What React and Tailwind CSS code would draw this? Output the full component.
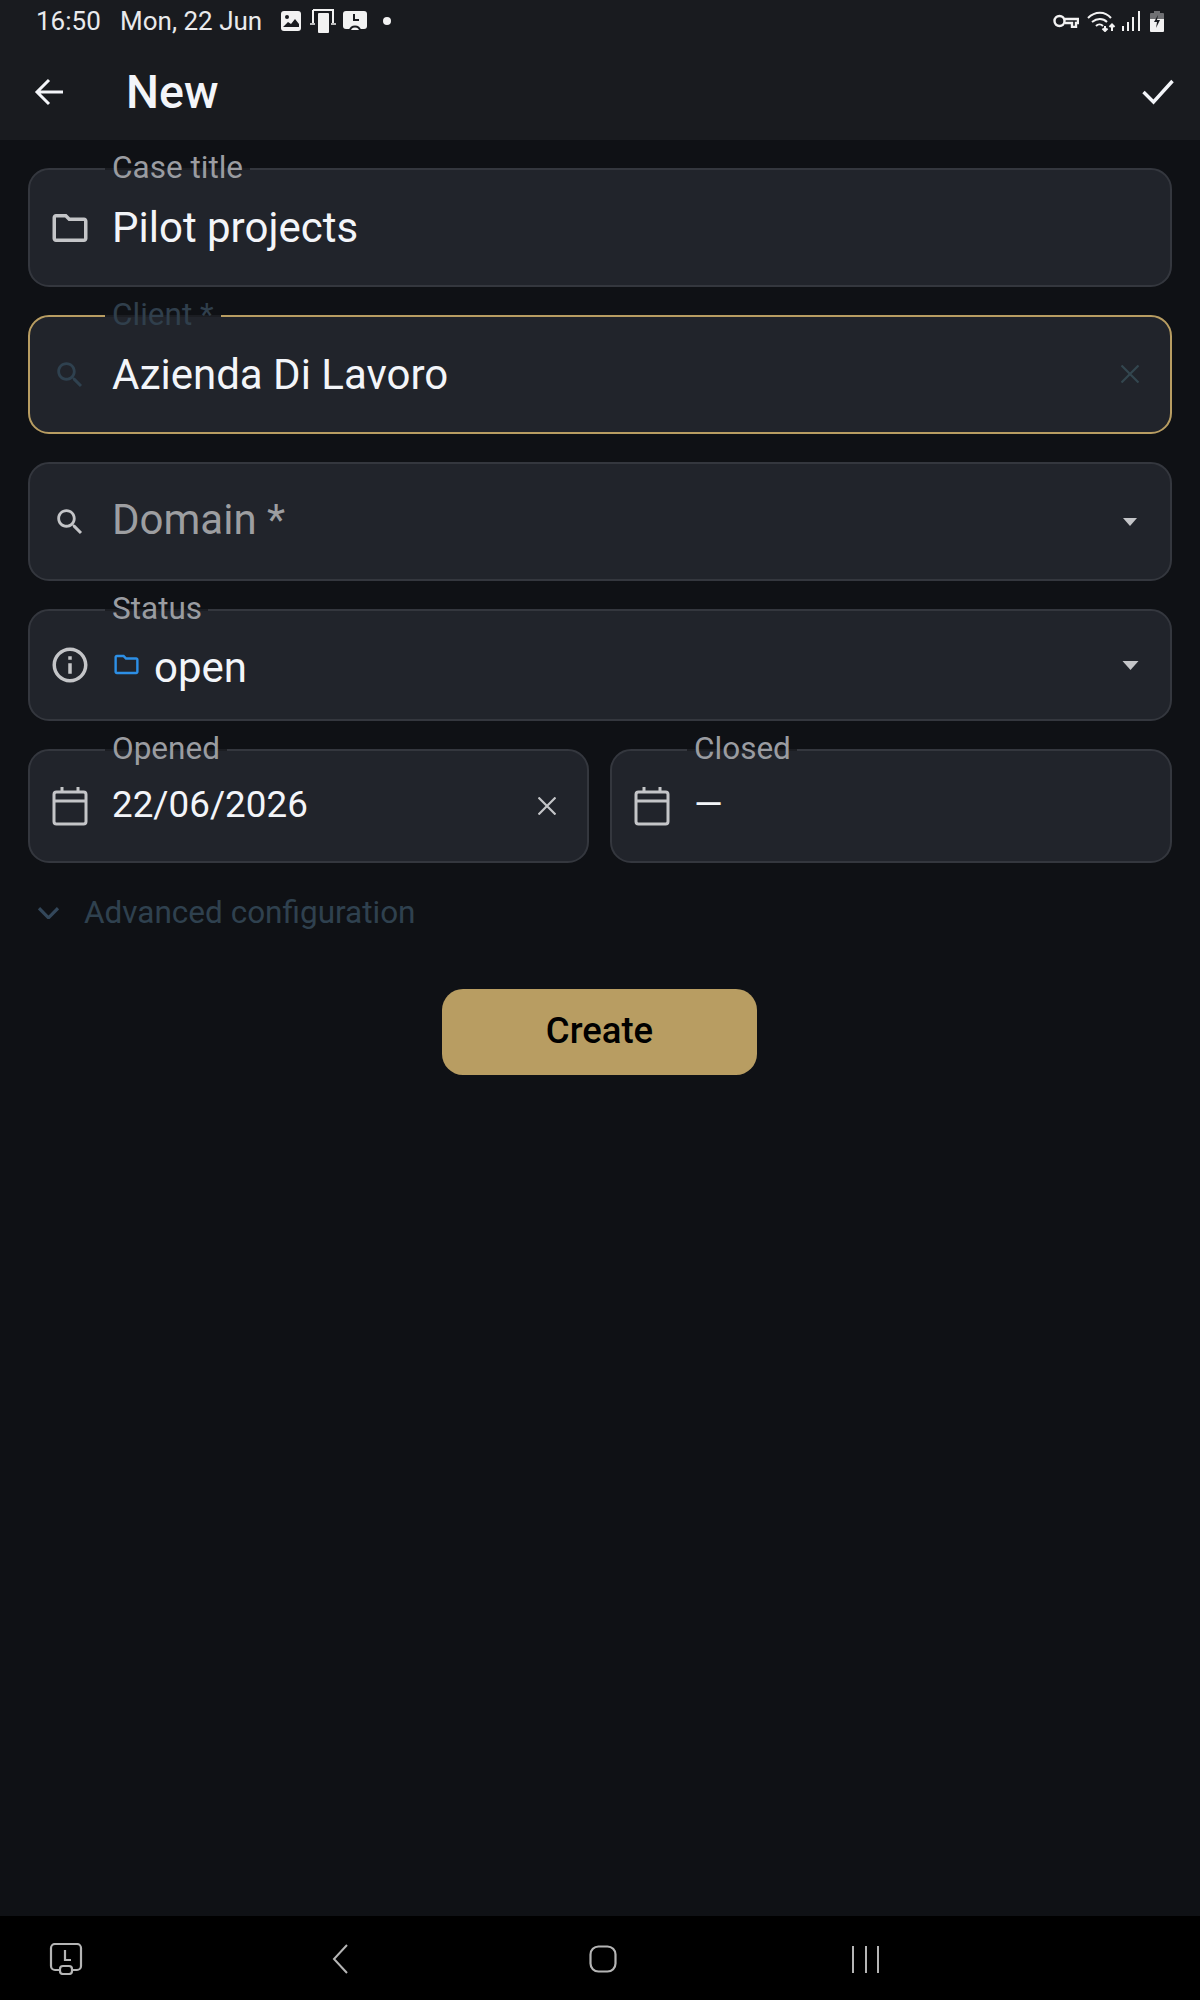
import React from 'react';

const FOLDER = 'M9.17 6l2 2H20v10H4V6h5.17M10 4H4c-1.1 0-1.99.9-1.99 2L2 18c0 1.1.9 2 2 2h16c1.1 0 2-.9 2-2V8c0-1.1-.9-2-2-2h-8l-2-2z';
const SEARCH = 'M15.5 14h-.79l-.28-.27C15.41 12.59 16 11.11 16 9.5 16 5.91 13.09 3 9.5 3S3 5.91 3 9.5 5.91 16 9.5 16c1.61 0 3.09-.59 4.23-1.57l.27.28v.79l5 4.99L20.49 19l-4.99-5zm-6 0C7.01 14 5 11.99 5 9.5S7.01 5 9.5 5 14 7.01 14 9.5 11.99 14 9.5 14z';
const INFO = 'M11 7h2v2h-2zm0 4h2v6h-2zm1-9C6.48 2 2 6.48 2 12s4.48 10 10 10 10-4.48 10-10S17.52 2 12 2zm0 18c-4.41 0-8-3.59-8-8s3.59-8 8-8 8 3.59 8 8-3.59 8-8 8z';

const Icon = ({ d, className }) => (
    <svg viewBox="0 0 24 24" fill="currentColor" className={className}><path d={d} /></svg>
);

const Calendar = ({ className }) => (
    <svg viewBox="0 0 36 40" fill="none" stroke="currentColor" strokeWidth="3" className={className}>
        <rect x="2" y="6" width="32" height="32" rx="2.5" />
        <path d="M2 15h32M10 1v6M26 1v6" />
    </svg>
);

const Cross = ({ className }) => (
    <svg viewBox="0 0 18 18" fill="none" stroke="currentColor" strokeWidth="2.2" className={className}>
        <path d="M0.5 0.5l17 17M17.5 0.5l-17 17" />
    </svg>
);

const Caret = ({ className }) => (
    <svg viewBox="0 0 16 9" fill="currentColor" className={className}><path d="M0 0h16L8 9z" /></svg>
);

// outlined field with the label cut into its top border
const Field = ({ label, labelClass = 'text-[#9a9ca1]', focused, notch = 'w-[145px]', className = '', children }) => (
    <div className={`relative flex items-center rounded-[21px] border-2 bg-[#21242b] ${focused ? 'border-[#b89d62]' : 'border-[#34373e]'} ${className}`}>
        {label && (
            <>
                <span className={`absolute left-[75px] -top-[2px] h-[2px] bg-[#1b1d22] ${notch}`} />
                <span className={`absolute left-[82px] -top-[20px] text-[31.5px] leading-[36px] ${labelClass}`}>{label}</span>
            </>
        )}
        {children}
    </div>
);

const StatusBar = () => (
    <div className="flex h-[56px] items-center pb-[14px] pl-[36px] text-[26px] leading-none text-[#e9eaec]">
        <span className="w-[84px]">16:50</span>
        <span className="w-[161px]">Mon, 22 Jun</span>
        <svg viewBox="0 0 20 20" className="w-[20px] h-[20px]">
            <rect width="20" height="20" rx="3" fill="#f2f2f2" />
            <circle cx="6" cy="6" r="2" fill="#191b1f" />
            <path d="M2 16l5-5 3 2 4-5 4 5v3z" fill="#191b1f" />
        </svg>
        <svg viewBox="0 0 26 24" className="w-[26px] h-[24px] ml-[9px]">
            <path d="M3 1h20v13M3 14V1" fill="none" stroke="#f2f2f2" strokeWidth="2" />
            <path d="M0 15h5M21 15h5" stroke="#f2f2f2" strokeWidth="1.5" />
            <rect x="8" y="4" width="11" height="20" rx="1" fill="#f2f2f2" />
        </svg>
        <svg viewBox="0 0 24 20" className="w-[24px] h-[20px] ml-[7px]">
            <rect width="24" height="18" rx="3" fill="#f2f2f2" />
            <path d="M11 3v6h5" fill="none" stroke="#191b1f" strokeWidth="2" />
            <path d="M7 20c0-6 10-6 10 0z" fill="#f2f2f2" stroke="#191b1f" strokeWidth="2" />
        </svg>
        <span className="ml-[16px] h-[8px] w-[8px] rounded-full bg-[#f2f2f2]" />
        <div className="ml-auto mr-[36px] flex items-center">
            <svg viewBox="0 0 26 14" fill="none" stroke="#f2f2f2" strokeWidth="2.4" className="w-[26px] h-[14px]">
                <circle cx="6.5" cy="7" r="5" />
                <path d="M11.5 5H25v4h-2v4h-4V9h-7" />
            </svg>
            <svg viewBox="0 0 29 21" fill="none" stroke="#f2f2f2" strokeWidth="2" className="ml-[8px] w-[29px] h-[21px]">
                <path d="M1 7c7-7 17-7 23 0M5 11c5-4 11-4 15 0M9 15c2-2 5-2 7 0M18 15v5M15.5 17.5l2.5 2.5 2.5-2.5M25 20v-6M22.5 16l2.5-2.5 2.5 2.5" />
            </svg>
            <svg viewBox="0 0 18 20" fill="#f2f2f2" className="ml-[6px] w-[18px] h-[20px]">
                <rect x="0" y="15" width="2" height="5" />
                <rect x="5" y="11" width="2" height="9" />
                <rect x="10" y="6" width="2" height="14" />
                <rect x="16" y="0" width="2" height="20" />
            </svg>
            <svg viewBox="0 0 14 21" className="ml-[10px] w-[14px] h-[21px]">
                <path d="M4 0h6v2h3a1 1 0 011 1v5H0V3a1 1 0 011-1h3z" fill="#6f7073" />
                <path d="M0 8h14v12a1 1 0 01-1 1H1a1 1 0 01-1-1z" fill="#f2f2f2" />
                <path d="M8 4L4 11h3l-1 6 4-8H7z" fill="#191b1f" />
            </svg>
        </div>
    </div>
);

const NavBar = () => (
    <div className="flex h-[84px] items-center bg-black pt-[2px] text-[#b5b5b5]">
        <svg viewBox="0 0 34 32" fill="none" stroke="currentColor" strokeWidth="2.2" className="ml-[49px] w-[34px] h-[32px]">
            <path d="M11 27H6a4 4 0 01-4-4V5a4 4 0 014-4h22a4 4 0 014 4v18a4 4 0 01-4 4h-5" />
            <path d="M16 7v10h6" />
            <rect x="11" y="23" width="12" height="8" rx="3" />
        </svg>
        <svg viewBox="0 0 16 30" fill="none" stroke="currentColor" strokeWidth="2" className="ml-[249px] w-[16px] h-[30px]">
            <path d="M15 1L2 15l13 14" />
        </svg>
        <svg viewBox="0 0 28 28" fill="none" stroke="currentColor" strokeWidth="2.2" className="ml-[241px] w-[28px] h-[28px]">
            <rect x="1.5" y="1.5" width="25" height="25" rx="8" />
        </svg>
        <div className="ml-[235px] flex h-[27px] w-[27px] justify-between">
            <span className="w-[2px] bg-[#b5b5b5]" />
            <span className="w-[2px] bg-[#b5b5b5]" />
            <span className="w-[2px] bg-[#b5b5b5]" />
        </div>
    </div>
);

const App = () => (
    <div className="flex h-[2000px] w-[1200px] flex-col bg-[#0f1115] font-['Roboto',sans-serif]">
        <div className="bg-[#191b1f]">
            <StatusBar />
            <div className="flex h-[84px] items-center pb-[12px] pl-[34px] pr-[26px]">
                <svg viewBox="0 0 30 28" fill="none" stroke="#f3f5f9" strokeWidth="3" className="w-[30px] h-[28px]">
                    <path d="M29 14H3M15 2L3 14l12 12" />
                </svg>
                <span className="ml-[62px] text-[46.5px] leading-none font-medium text-[#f3f5f9]">New</span>
                <svg viewBox="0 0 32 26" fill="none" stroke="#f3f5f9" strokeWidth="3.4" className="ml-auto w-[32px] h-[26px]">
                    <path d="M1.5 13l10 10L30.5 2" />
                </svg>
            </div>
        </div>

        <div className="flex flex-1 flex-col gap-[28px] px-[28px] pt-[28px]">
            <Field label="Case title" className="h-[119px]">
                <Icon d={FOLDER} className="ml-[19px] w-[42px] h-[42px] text-[#c4c5c8]" />
                <span className="ml-[21px] text-[42px] leading-none text-[#f3f5f9]">Pilot projects</span>
            </Field>
            <Field label="Client *" labelClass="text-[#303f4c]" focused notch="w-[116px]" className="h-[119px]">
                <Icon d={SEARCH} className="ml-[23px] w-[34px] h-[34px] text-[#2f414f]" />
                <span className="ml-[25px] text-[42px] leading-none text-[#f3f5f9]">Azienda Di Lavoro</span>
                <Cross className="ml-auto mr-[31px] -mt-[1px] w-[18px] h-[18px] text-[#33464f]" />
            </Field>
            <Field className="h-[119px]">
                <Icon d={SEARCH} className="ml-[23px] w-[34px] h-[34px] text-[#c4c5c8]" />
                <span className="ml-[25px] pb-[4px] text-[42px] leading-none text-[#9d9ea1]">Domain *</span>
                <Caret className="ml-auto mr-[33px] w-[14px] h-[8px] text-[#c4c5c8]" />
            </Field>
            <Field label="Status" notch="w-[103px]" className="h-[112px]">
                <Icon d={INFO} className="ml-[19px] w-[42px] h-[42px] text-[#c4c5c8]" />
                <Icon d={FOLDER} className="ml-[21px] -mt-[1px] w-[29px] h-[29px] text-[#2d8fe6]" />
                <span className="ml-[13px] mt-[6px] text-[42px] leading-none text-[#f3f5f9]">open</span>
                <Caret className="ml-auto mr-[31px] w-[17px] h-[9px] text-[#c4c5c8]" />
            </Field>
            <div className="flex gap-[21px]">
                <Field label="Opened" notch="w-[122px]" className="h-[114px] w-[561px]">
                    <Calendar className="ml-[22px] w-[36px] h-[40px] text-[#c4c5c8]" />
                    <span className="ml-[24px] pb-[2px] text-[36.8px] leading-none text-[#f3f5f9]">22/06/2026</span>
                    <Cross className="ml-auto mr-[31px] w-[18px] h-[18px] text-[#c4c5c8]" />
                </Field>
                <Field label="Closed" notch="w-[110px]" className="h-[114px] flex-1">
                    <Calendar className="ml-[22px] w-[36px] h-[40px] text-[#c4c5c8]" />
                    <span className="ml-[24px] pb-[2px] text-[36.8px] leading-none text-[#f3f5f9]">—</span>
                </Field>
            </div>
            <div className="mt-[5px] flex items-center pl-[10px]">
                <svg viewBox="0 0 22 12" fill="none" stroke="#33475a" strokeWidth="3.4" className="w-[21px] h-[12px]">
                    <path d="M1 1l10 10L21 1" />
                </svg>
                <span className="ml-[25px] text-[31.5px] leading-[34px] text-[#2f414f]">Advanced configuration</span>
            </div>
            <div className="mt-[31px] flex justify-center pr-[1px]">
                <button className="h-[86px] w-[315px] rounded-[21px] bg-[#b89d62] pb-[1px] text-[36.5px] font-medium text-black">Create</button>
            </div>
        </div>

        <NavBar />
    </div>
);

export default App;
